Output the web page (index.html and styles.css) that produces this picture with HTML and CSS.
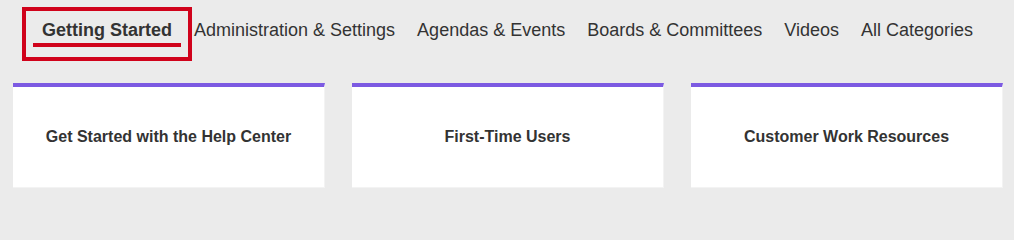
FILE: index.html
```html
<!DOCTYPE html>
<html lang="en">
<head>
<meta charset="utf-8">
<title>Help Center</title>
<link rel="stylesheet" href="styles.css">
</head>
<body>
<nav class="tabs">
  <ul class="tab-list">
    <li class="tab active"><span class="tab-label">Getting Started</span></li>
    <li class="tab"><span class="tab-label">Administration &amp; Settings</span></li>
    <li class="tab"><span class="tab-label">Agendas &amp; Events</span></li>
    <li class="tab"><span class="tab-label">Boards &amp; Committees</span></li>
    <li class="tab"><span class="tab-label">Videos</span></li>
    <li class="tab"><span class="tab-label">All Categories</span></li>
  </ul>
</nav>
<main class="cards">
  <a class="card" href="#">Get Started with the Help Center</a>
  <a class="card" href="#">First-Time Users</a>
  <a class="card" href="#">Customer Work Resources</a>
</main>
</body>
</html>
```
FILE: styles.css
```css
* { box-sizing: border-box; }

html, body {
  margin: 0;
  background: #ebebeb;
  font-family: "Liberation Sans", Arial, sans-serif;
  color: #333333;
}

.tabs {
  padding: 19px 0 0 42px;
}

.tab-list {
  list-style: none;
  margin: 0;
  padding: 0;
  display: flex;
  align-items: flex-start;
  gap: 22px;
}

.tab {
  font-size: 18px;
  line-height: 22px;
  white-space: nowrap;
}

.tab.active {
  font-weight: bold;
  border: 4px solid #d0021b;
  padding: 8px 7px 10px;
  margin: -12px -20px -20px;
}

.tab.active .tab-label {
  display: block;
  padding: 0 9px 2px;
  border-bottom: 4px solid #d0021b;
}

.cards {
  display: grid;
  grid-template-columns: repeat(3, 312px);
  gap: 27px;
  padding: 0 0 0 13px;
  margin-top: 42px;
}

.card {
  height: 105px;
  background: #ffffff;
  border-top: 4px solid #7c5ae2;
  border-right: 1px solid #f3f3f3;
  border-bottom: 1px solid #f3f3f3;
  display: flex;
  align-items: center;
  justify-content: center;
  font-size: 16px;
  font-weight: bold;
  color: #333333;
  text-decoration: none;
}
```
